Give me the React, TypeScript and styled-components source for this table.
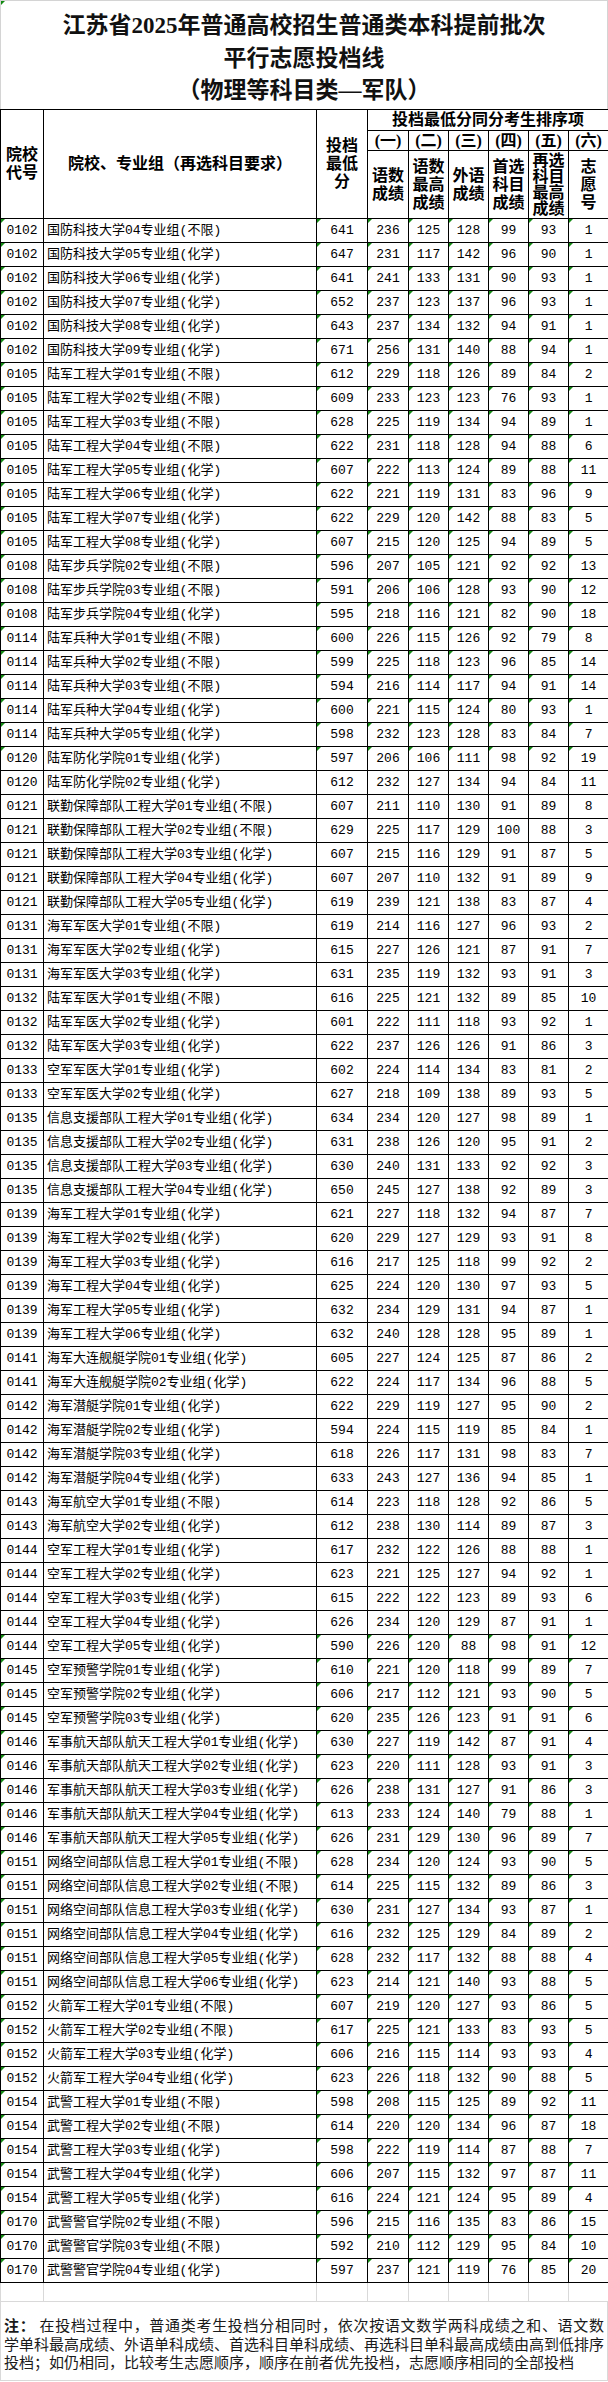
import React from 'react'
import styled, { createGlobalStyle } from 'styled-components'

const GlobalStyle = createGlobalStyle`
  html, body {
    margin: 0;
    padding: 0;
    background: #fff;
  }
  body {
    width: 608px;
  }
`

const COLS = [43, 273, 51, 41, 40, 40, 40, 40, 40]

const DATA = `0102|国防科技大学04专业组(不限)|641|236|125|128|99|93|1
0102|国防科技大学05专业组(化学)|647|231|117|142|96|90|1
0102|国防科技大学06专业组(化学)|641|241|133|131|90|93|1
0102|国防科技大学07专业组(化学)|652|237|123|137|96|93|1
0102|国防科技大学08专业组(化学)|643|237|134|132|94|91|1
0102|国防科技大学09专业组(化学)|671|256|131|140|88|94|1
0105|陆军工程大学01专业组(不限)|612|229|118|126|89|84|2
0105|陆军工程大学02专业组(不限)|609|233|123|123|76|93|1
0105|陆军工程大学03专业组(不限)|628|225|119|134|94|89|1
0105|陆军工程大学04专业组(不限)|622|231|118|128|94|88|6
0105|陆军工程大学05专业组(化学)|607|222|113|124|89|88|11
0105|陆军工程大学06专业组(化学)|622|221|119|131|83|96|9
0105|陆军工程大学07专业组(化学)|622|229|120|142|88|83|5
0105|陆军工程大学08专业组(化学)|607|215|120|125|94|89|5
0108|陆军步兵学院02专业组(不限)|596|207|105|121|92|92|13
0108|陆军步兵学院03专业组(不限)|591|206|106|128|93|90|12
0108|陆军步兵学院04专业组(化学)|595|218|116|121|82|90|18
0114|陆军兵种大学01专业组(不限)|600|226|115|126|92|79|8
0114|陆军兵种大学02专业组(不限)|599|225|118|123|96|85|14
0114|陆军兵种大学03专业组(不限)|594|216|114|117|94|91|14
0114|陆军兵种大学04专业组(化学)|600|221|115|124|80|93|1
0114|陆军兵种大学05专业组(化学)|598|232|123|128|83|84|7
0120|陆军防化学院01专业组(化学)|597|206|106|111|98|92|19
0120|陆军防化学院02专业组(化学)|612|232|127|134|94|84|11
0121|联勤保障部队工程大学01专业组(不限)|607|211|110|130|91|89|8
0121|联勤保障部队工程大学02专业组(不限)|629|225|117|129|100|88|3
0121|联勤保障部队工程大学03专业组(化学)|607|215|116|129|91|87|5
0121|联勤保障部队工程大学04专业组(化学)|607|207|110|132|91|89|9
0121|联勤保障部队工程大学05专业组(化学)|619|239|121|138|83|87|4
0131|海军军医大学01专业组(不限)|619|214|116|127|96|93|2
0131|海军军医大学02专业组(化学)|615|227|126|121|87|91|7
0131|海军军医大学03专业组(化学)|631|235|119|132|93|91|3
0132|陆军军医大学01专业组(不限)|616|225|121|132|89|85|10
0132|陆军军医大学02专业组(化学)|601|222|111|118|93|92|1
0132|陆军军医大学03专业组(化学)|622|237|126|126|91|86|3
0133|空军军医大学01专业组(化学)|602|224|114|134|83|81|2
0133|空军军医大学02专业组(化学)|627|218|109|138|89|93|5
0135|信息支援部队工程大学01专业组(化学)|634|234|120|127|98|89|1
0135|信息支援部队工程大学02专业组(化学)|631|238|126|120|95|91|2
0135|信息支援部队工程大学03专业组(化学)|630|240|131|133|92|92|3
0135|信息支援部队工程大学04专业组(化学)|650|245|127|138|92|89|3
0139|海军工程大学01专业组(化学)|621|227|118|132|94|87|7
0139|海军工程大学02专业组(化学)|620|229|127|129|93|91|8
0139|海军工程大学03专业组(化学)|616|217|125|118|99|92|2
0139|海军工程大学04专业组(化学)|625|224|120|130|97|93|5
0139|海军工程大学05专业组(化学)|632|234|129|131|94|87|1
0139|海军工程大学06专业组(化学)|632|240|128|128|95|89|1
0141|海军大连舰艇学院01专业组(化学)|605|227|124|125|87|86|2
0141|海军大连舰艇学院02专业组(化学)|622|224|117|134|96|88|5
0142|海军潜艇学院01专业组(化学)|622|229|119|127|95|90|2
0142|海军潜艇学院02专业组(化学)|594|224|115|119|85|84|1
0142|海军潜艇学院03专业组(化学)|618|226|117|131|98|83|7
0142|海军潜艇学院04专业组(化学)|633|243|127|136|94|85|1
0143|海军航空大学01专业组(不限)|614|223|118|128|92|86|5
0143|海军航空大学02专业组(化学)|612|238|130|114|89|87|3
0144|空军工程大学01专业组(化学)|617|232|122|126|88|88|1
0144|空军工程大学02专业组(化学)|623|221|125|127|94|92|1
0144|空军工程大学03专业组(化学)|615|222|122|123|89|93|6
0144|空军工程大学04专业组(化学)|626|234|120|129|87|91|1
0144|空军工程大学05专业组(化学)|590|226|120|88|98|91|12
0145|空军预警学院01专业组(化学)|610|221|120|118|99|89|7
0145|空军预警学院02专业组(化学)|606|217|112|121|93|90|5
0145|空军预警学院03专业组(化学)|620|235|126|123|91|91|6
0146|军事航天部队航天工程大学01专业组(化学)|630|227|119|142|87|91|4
0146|军事航天部队航天工程大学02专业组(化学)|623|220|111|128|93|91|3
0146|军事航天部队航天工程大学03专业组(化学)|626|238|131|127|91|86|3
0146|军事航天部队航天工程大学04专业组(化学)|613|233|124|140|79|88|1
0146|军事航天部队航天工程大学05专业组(化学)|626|231|129|130|96|89|7
0151|网络空间部队信息工程大学01专业组(不限)|628|234|120|124|93|90|5
0151|网络空间部队信息工程大学02专业组(不限)|614|225|115|132|89|86|3
0151|网络空间部队信息工程大学03专业组(化学)|630|231|127|134|93|87|1
0151|网络空间部队信息工程大学04专业组(化学)|616|232|125|129|84|89|2
0151|网络空间部队信息工程大学05专业组(化学)|628|232|117|132|88|88|4
0151|网络空间部队信息工程大学06专业组(化学)|623|214|121|140|93|88|5
0152|火箭军工程大学01专业组(不限)|607|219|120|127|93|86|5
0152|火箭军工程大学02专业组(不限)|617|225|121|133|83|93|5
0152|火箭军工程大学03专业组(化学)|606|216|115|114|93|93|4
0152|火箭军工程大学04专业组(化学)|623|226|118|132|90|88|5
0154|武警工程大学01专业组(不限)|598|208|115|125|89|92|11
0154|武警工程大学02专业组(不限)|614|220|120|134|96|87|18
0154|武警工程大学03专业组(化学)|598|222|119|114|87|88|7
0154|武警工程大学04专业组(化学)|606|207|115|132|97|87|11
0154|武警工程大学05专业组(化学)|616|224|121|124|95|89|4
0170|武警警官学院02专业组(不限)|596|215|116|135|83|86|15
0170|武警警官学院03专业组(不限)|592|210|112|129|95|84|10
0170|武警警官学院04专业组(化学)|597|237|121|119|76|85|20`

const rows = DATA.split('\n').map(line => line.split('|'))

// rows (1-based) where the sheet shows the little green "number as text" flags
const isFlagged = (n: number) => (n >= 1 && n <= 23) || (n >= 60 && n <= 86)

const SUB_HEADS: { label: string; lines: string[]; tight?: boolean }[] = [
  { label: '(一)', lines: ['语数', '成绩'] },
  { label: '(二)', lines: ['语数', '最高', '成绩'] },
  { label: '(三)', lines: ['外语', '成绩'] },
  { label: '(四)', lines: ['首选', '科目', '成绩'] },
  { label: '(五)', lines: ['再选', '科目', '最高', '成绩'], tight: true },
  { label: '(六)', lines: ['志', '愿', '号'] },
]

const Page = styled.div`
  width: 608px;
  height: 2382px;
  background: #fff;
  color: #000;
  display: flex;
  flex-direction: column;
  font-family: "Noto Sans CJK SC", sans-serif;
`

const Flag = styled.span`
  position: absolute;
  top: 0;
  left: 0;
  width: 0;
  height: 0;
  border-top: 4px solid #138a13;
  border-right: 4px solid transparent;
`

const Title = styled.div`
  position: relative;
  height: 109px;
  box-sizing: border-box;
  padding-top: 9px;
  border: 1px solid #d4d4d4;
  border-bottom: none;
  text-align: center;
  font-family: "Liberation Serif", "Noto Sans CJK SC", serif;
  font-weight: 700;
  font-size: 23px;
  line-height: 32.5px;
  color: #111;
`

const Table = styled.table`
  width: 608px;
  border-collapse: collapse;
  table-layout: fixed;
  font-family: "Liberation Mono", "Noto Sans CJK SC", monospace;
  font-size: 13px;
`

const HeadRow = styled.tr<{ $h: number }>`
  height: ${p => p.$h}px;
`

const HeadCell = styled.th<{ $tight?: boolean }>`
  border: 1px solid #000;
  padding: 0;
  font-family: "Liberation Serif", "Noto Sans CJK SC", serif;
  font-weight: 700;
  font-size: 16px;
  line-height: ${p => (p.$tight ? '16px' : '18px')};
  text-align: center;
  vertical-align: middle;
  white-space: nowrap;
`

const Row = styled.tr`
  height: 24px;
`

const Cell = styled.td<{ $left?: boolean }>`
  position: relative;
  border: 1px solid #000;
  padding: ${p => (p.$left ? '0 0 0 3px' : '0')};
  text-align: ${p => (p.$left ? 'left' : 'center')};
  vertical-align: middle;
  white-space: nowrap;
  overflow: hidden;
  line-height: 16px;
`

const Tail = styled.div`
  display: grid;
  grid-template-columns: ${COLS.map(w => w + 'px').join(' ')};
  height: 19px;
  box-sizing: border-box;
  border-bottom: 1px solid #d9d9d9;
  border-left: 1px solid #d9d9d9;
`

const TailCell = styled.div`
  border-right: 1px solid #d9d9d9;
`

const Note = styled.div`
  flex: 1;
  box-sizing: border-box;
  padding: 14px 3px 0 3px;
  border-left: 1px solid #d9d9d9;
  border-right: 1px solid #d9d9d9;
  border-bottom: 1px solid #d9d9d9;
  margin-bottom: 1px;
  font-size: 15px;
  line-height: 18.5px;
  color: #1a1a1a;
`

const NoteLine = styled.div<{ $fill?: boolean }>`
  white-space: nowrap;
  text-align: ${p => (p.$fill ? 'justify' : 'left')};
  text-align-last: ${p => (p.$fill ? 'justify' : 'left')};
`

const NoteLabel = styled.b`
  font-weight: 700;
`

const App = () => {
  return (
    <Page>
      <GlobalStyle />
      <Title>
        <Flag />
        <div>江苏省2025年普通高校招生普通类本科提前批次</div>
        <div>平行志愿投档线</div>
        <div>（物理等科目类—军队）</div>
      </Title>

      <Table>
        <colgroup>
          {COLS.map((w, i) => (
            <col key={i} style={{ width: w }} />
          ))}
        </colgroup>
        <thead>
          <HeadRow $h={21}>
            <HeadCell rowSpan={3}>
              院校
              <br />
              代号
            </HeadCell>
            <HeadCell rowSpan={3}>院校、专业组（再选科目要求）</HeadCell>
            <HeadCell rowSpan={3}>
              投档
              <br />
              最低
              <br />分
            </HeadCell>
            <HeadCell colSpan={6}>投档最低分同分考生排序项</HeadCell>
          </HeadRow>
          <HeadRow $h={20}>
            {SUB_HEADS.map(h => (
              <HeadCell key={h.label}>{h.label}</HeadCell>
            ))}
          </HeadRow>
          <HeadRow $h={68}>
            {SUB_HEADS.map(h => (
              <HeadCell key={h.label} $tight={h.tight}>
                {h.lines.map((l, i) => (
                  <React.Fragment key={i}>
                    {i > 0 && <br />}
                    {l}
                  </React.Fragment>
                ))}
              </HeadCell>
            ))}
          </HeadRow>
        </thead>
        <tbody>
          {rows.map((r, idx) => {
            const flagged = isFlagged(idx + 1)
            return (
              <Row key={idx}>
                <Cell>
                  {flagged && <Flag />}
                  {r[0]}
                </Cell>
                <Cell $left>{r[1]}</Cell>
                {r.slice(2).map((v, i) => (
                  <Cell key={i}>
                    {flagged && <Flag />}
                    {v}
                  </Cell>
                ))}
              </Row>
            )
          })}
        </tbody>
      </Table>

      <Tail>
        {COLS.map((_, i) => (
          <TailCell key={i} />
        ))}
      </Tail>

      <Note>
        <NoteLine $fill>
          <NoteLabel>注：</NoteLabel> 在投档过程中，普通类考生投档分相同时，依次按语文数学两科成绩之和、语文数
        </NoteLine>
        <NoteLine $fill>学单科最高成绩、外语单科成绩、首选科目单科成绩、再选科目单科最高成绩由高到低排序</NoteLine>
        <NoteLine>投档；如仍相同，比较考生志愿顺序，顺序在前者优先投档，志愿顺序相同的全部投档</NoteLine>
      </Note>
    </Page>
  )
}

export default App
